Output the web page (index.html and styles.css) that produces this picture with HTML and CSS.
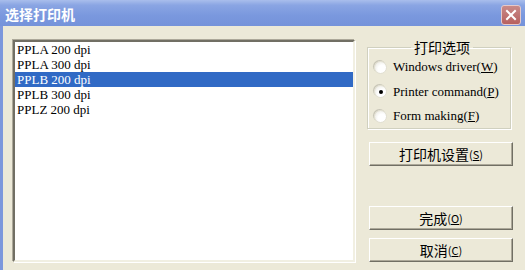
FILE: index.html
```html
<!DOCTYPE html>
<html>
<head>
<meta charset="utf-8">
<link rel="stylesheet" href="styles.css">
</head>
<body>
<div class="window">
  <div class="titlebar">
    <span class="title">选择打印机</span>
    <span class="close">
      <svg width="12" height="12" viewBox="0 0 12 12"><path d="M2 2 L10 10 M10 2 L2 10" stroke="#fff" stroke-width="2" stroke-linecap="square"/></svg>
    </span>
  </div>
  <div class="body">
    <div class="list">
      <div class="item">PPLA 200 dpi</div>
      <div class="item">PPLA 300 dpi</div>
      <div class="item selected">PPLB 200 dpi</div>
      <div class="item">PPLB 300 dpi</div>
      <div class="item">PPLZ 200 dpi</div>
    </div>
    <div class="side">
      <fieldset class="group">
        <legend class="legend">打印选项</legend>
        <div class="radio"><span class="dot"></span><span class="rlabel">Windows driver(<u>W</u>)</span></div>
        <div class="radio"><span class="dot checked"></span><span class="rlabel">Printer command(<u>P</u>)</span></div>
        <div class="radio"><span class="dot"></span><span class="rlabel">Form making(<u>F</u>)</span></div>
      </fieldset>
      <div class="btn btn-setup">打印机设置<span class="acc">(<u>S</u>)</span></div>
      <div class="btn btn-ok">完成<span class="acc">(<u>O</u>)</span></div>
      <div class="btn btn-cancel">取消<span class="acc">(<u>C</u>)</span></div>
    </div>
  </div>
</div>
</body>
</html>
```
FILE: styles.css
```css
html, body {
  margin: 0;
  padding: 0;
  width: 525px;
  height: 270px;
  overflow: hidden;
  background: #ECE9D8;
}
.window {
  width: 525px;
  height: 270px;
  display: flex;
  flex-direction: column;
}
.titlebar {
  height: 26px;
  flex: none;
  display: flex;
  align-items: center;
  justify-content: space-between;
  padding: 0 4px 0 5px;
  background: linear-gradient(to bottom, #A9BEEC 0%, #8AA5E3 20%, #7A98DE 60%, #7593DA 100%);
}
.title {
  color: #fff;
  font-family: "Noto Sans CJK SC", sans-serif;
  font-weight: bold;
  font-size: 14px;
  line-height: 16px;
  margin-top: 1px;
}
.close {
  width: 18px;
  height: 18px;
  border: 1px solid #E5C9C9;
  border-radius: 3px;
  background: linear-gradient(to bottom, #C98A88, #B7615F);
  display: flex;
  align-items: center;
  justify-content: center;
  margin-top: 3px;
}
.body {
  flex: 1;
  display: flex;
  gap: 12px;
  padding: 14px 0 8px 10px;
  border-left: 3px solid #7C97DC;
}
.list {
  width: 338px;
  height: 218px;
  background: #fff;
  border-style: solid;
  border-width: 2px;
  border-color: #716F64 #F1EFE2 #F1EFE2 #716F64;
  box-shadow: -1px -1px 0 #ACA899, 1px 1px 0 #fff;
  font-family: "Liberation Serif", serif;
  font-size: 13px;
}
.item {
  height: 15px;
  line-height: 15px;
  padding-left: 2px;
  color: #000;
}
.item.selected {
  background: #316AC5;
  color: #fff;
}
.side {
  width: 146px;
  display: flex;
  flex-direction: column;
}
.group {
  margin: 0;
  padding: 1px 0 4px 6px;
  width: 144px;
  box-sizing: border-box;
  height: 89px;
  border: 1px solid #D0D0BF;
  box-shadow: inset 1px 1px 0 #fff, 1px 1px 0 #fff;
}
.legend {
  margin: 0 auto;
  padding: 0 3px;
  font-family: "Noto Sans CJK SC", sans-serif;
  font-size: 14px;
  line-height: 14px;
}
.radio {
  height: 24.5px;
  display: flex;
  align-items: center;
  gap: 6px;
}
.rlabel {
  font-family: "Liberation Serif", "Times New Roman", serif;
  font-size: 13px;
  color: #000;
}
.dot {
  width: 11px;
  height: 11px;
  border-radius: 50%;
  background: radial-gradient(circle at 65% 65%, #fff 40%, #E6E4DA 100%);
  border: 1px solid #E2E0D3;
  box-shadow: -1px -1px 0 #C8C6B8;
  display: flex;
  align-items: center;
  justify-content: center;
}
.dot.checked::after {
  content: "";
  width: 4px;
  height: 4px;
  border-radius: 50%;
  background: #000;
}
.btn {
  height: 24px;
  width: 144px;
  margin-left: 2px;
  box-sizing: border-box;
  display: flex;
  align-items: center;
  justify-content: center;
  background: #ECE9D8;
  border-style: solid;
  border-width: 1px;
  border-color: #fff #716F64 #716F64 #fff;
  box-shadow: inset -1px -1px 0 #ACA899;
  font-family: "Noto Sans CJK SC", sans-serif;
  font-size: 14px;
  color: #000;
}
.acc {
  font-size: 11px;
}
.btn-setup {
  margin-top: 13px;
}
.btn-ok {
  margin-top: auto;
}
.btn-cancel {
  margin-top: 8px;
}
```
